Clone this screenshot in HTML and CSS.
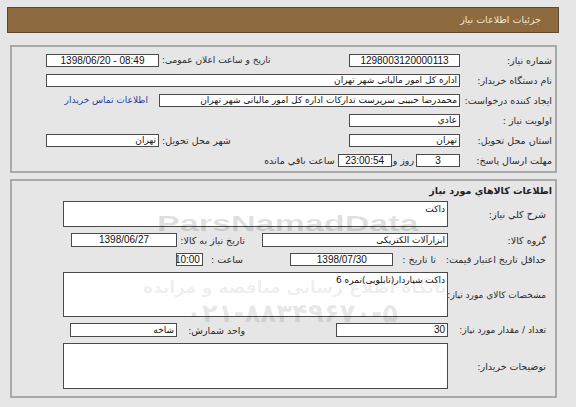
FILE: index.html
```html
<!DOCTYPE html>
<html lang="fa" dir="rtl">
<head>
<meta charset="utf-8">
<link rel="stylesheet" href="styles.css">
</head>
<body>
<div class="page">
  <div class="header">جزئیات اطلاعات نیاز</div>

  <div class="panel p1">
    <div class="grid1">
      <div class="lbl">شماره نیاز:</div>
      <div><span class="box w111 center">1298003120000113</span></div>
      <div class="lbl2 sm"><span>تاریخ و ساعت اعلان عمومی:</span></div>
      <div><span class="box w113 center" dir="ltr">1398/06/20 - 08:49</span></div>

      <div class="lbl">نام دستگاه خریدار:</div>
      <div class="span3"><span class="box full fa">اداره کل امور مالیاتی شهر تهران</span></div>

      <div class="lbl">ایجاد کننده درخواست:</div>
      <div class="span2"><span class="box full fa">محمدرضا حبیبی سرپرست تدارکات اداره کل امور مالیاتی شهر تهران</span></div>
      <div class="linkcell"><a class="link">اطلاعات تماس خریدار</a></div>

      <div class="lbl">اولویت نیاز :</div>
      <div class="span3"><span class="box w111 fa">عادي</span></div>

      <div class="lbl">استان محل تحویل:</div>
      <div><span class="box w111 fa">تهران</span></div>
      <div class="lbl2"><span>شهر محل تحویل:</span></div>
      <div><span class="box w113 fa">تهران</span></div>

      <div class="lbl">مهلت ارسال پاسخ:</div>
      <div class="span3 deadline">
        <span class="box w44 center">3</span>
        <span class="txt-days">روز و</span>
        <span class="box w54 center">23:00:54</span>
        <span class="txt-rem">ساعت باقي مانده</span>
      </div>
    </div>
  </div>

  <div class="panel p2">
    <div class="title">اطلاعات کالاهاي مورد نیاز</div>
    <div class="grid2">
      <div class="lbl l2">شرح کلي نیاز:</div>
      <div class="span3 fill"><span class="box tall fa">داکت</span></div>

      <div class="lbl l2">گروه کالا:</div>
      <div><span class="box w186 h14 fa">ابزارآلات الکتریکی</span></div>
      <div class="lbl3">تاریخ نیاز به کالا:</div>
      <div><span class="box w106 h14 center">1398/06/27</span></div>

      <div class="lbl l2">حداقل تاریخ اعتبار قیمت:</div>
      <div class="until">
        <span class="txt-until">تا تاریخ :</span>
        <span class="box w103 center">1398/07/30</span>
      </div>
      <div class="span2 timecell">
        <span class="txt-time">ساعت :</span>
        <span class="box w27 center">10:00</span>
      </div>

      <div class="lbl l2 sm">مشخصات کالاي مورد نیاز:</div>
      <div class="span3 fill"><span class="box tall fa">داکت شیاردار(تابلویی)نمره 6</span></div>

      <div class="lbl l2 sm">تعداد / مقدار مورد نیاز:</div>
      <div><span class="box w112 h14">30</span></div>
      <div class="lbl3">واحد شمارش:</div>
      <div><span class="box w107 h14 fa">شاخه</span></div>

      <div class="lbl l2">توضیحات خریدار:</div>
      <div class="span3 fill"><span class="box tall"></span></div>
    </div>
  </div>
</div>

<div class="wm" aria-hidden="true">
  <div class="wm-en">ParsNamadData</div>
  <div class="wm-fa1">پایگاه اطلاع رسانی مناقصه و مزایده</div>
  <div class="wm-fa2">۰۲۱-۸۸۳۴۹۶۷۰-۵</div>
</div>
</body>
</html>
```
FILE: styles.css
```css
* { box-sizing: border-box; }
html, body { margin: 0; padding: 0; }
body {
  width: 576px;
  height: 407px;
  overflow: hidden;
  position: relative;
  background: #e6e6e6;
  font-family: "DejaVu Sans", "Liberation Sans", sans-serif;
  font-size: 9.5px;
  color: #2a2a2a;
}
.page { padding: 7px 17px 0 7px; direction: rtl; }

.header {
  height: 26px;
  background: #8c6a3e;
  border: 1px solid #5b4934;
  color: #f3e9d6;
  font-size: 9.5px;
  line-height: 24px;
  padding-right: 17px;
}

.panel {
  margin: 12px 2px 0 3px;
  border: 2px solid #a9a9a9;
  background: #e6e6e6;
}
.p2 { margin-top: 6px; }

.grid1 {
  display: grid;
  grid-template-columns: 95px 188px 113px 113px;
  grid-auto-rows: 20px;
  align-items: center;
  padding: 3px 0 1px;
}
.span2 { grid-column: span 2; }
.span3 { grid-column: span 3; }

.lbl { padding-right: 3px; white-space: nowrap; }
.lbl2 {
  display: flex;
  justify-content: flex-end;
  padding-left: 3px;
  white-space: nowrap;
}
.lbl3 { padding-right: 16px; white-space: nowrap; }
.l2 { padding-right: 9px; }
.sm { font-size: 9px; }

.box {
  display: block;
  height: 13px;
  border: 1px solid #4a4a4a;
  background: #fff;
  color: #111;
  font-family: "Liberation Sans", "DejaVu Sans", sans-serif;
  font-size: 10px;
  line-height: 11px;
  padding: 0 2px;
  white-space: nowrap;
  overflow: hidden;
}
.box.fa { font-family: "DejaVu Sans", sans-serif; font-size: 9px; }
.center { text-align: center; }
.full { width: 100%; }
.w27 { width: 27px; }
.w44 { width: 44px; }
.w54 { width: 54px; }
.w103 { width: 103px; }
.w106 { width: 106px; }
.w107 { width: 107px; }
.w111 { width: 111px; }
.w112 { width: 112px; }
.w113 { width: 113px; }
.w186 { width: 186px; }
.h14 { height: 14px; line-height: 12px; }

.linkcell { padding-right: 11px; white-space: nowrap; font-size: 9px; }
.link { color: #2d3c9c; }

.deadline { display: flex; align-items: center; }
.txt-days { margin: 0 2px 0 1px; white-space: nowrap; }
.txt-rem { margin-right: 3px; white-space: nowrap; }

.title {
  height: 20px;
  line-height: 20px;
  font-weight: bold;
  padding-right: 3px;
  color: #222;
}
.grid2 {
  display: grid;
  grid-template-columns: 107px 187px 84px 114px;
  grid-template-rows: 26px 14px 13px 45px 14px 46px;
  row-gap: 6px;
  align-items: center;
  padding-bottom: 7px;
}
.fill { align-self: stretch; }
.fill .box { height: 100%; line-height: 13px; padding-top: 1px; }
.tall { width: 100%; }
.until { display: flex; align-items: center; padding-right: 12px; }
.txt-until { margin-left: 9px; white-space: nowrap; }
.timecell { display: flex; align-items: center; padding-right: 18px; }
.txt-time { margin-left: 8px; white-space: nowrap; }

.wm { position: absolute; inset: 0; pointer-events: none; }
.wm-en {
  position: absolute;
  left: 157px;
  top: 213px;
  font-family: "Liberation Sans", sans-serif;
  font-weight: bold;
  font-size: 22px;
  line-height: 22px;
  transform: scaleX(1.55);
  transform-origin: left top;
  color: rgba(0, 0, 0, 0.12);
}
.wm-fa1 {
  position: absolute;
  left: 143px;
  top: 276px;
  direction: rtl;
  font-family: "DejaVu Sans", sans-serif;
  font-weight: bold;
  font-size: 17px;
  line-height: 22px;
  color: rgba(0, 0, 0, 0.08);
}
.wm-fa2 {
  position: absolute;
  left: 186px;
  top: 298px;
  direction: ltr;
  font-family: "DejaVu Sans", sans-serif;
  font-weight: bold;
  font-size: 26px;
  line-height: 30px;
  color: rgba(0, 0, 0, 0.1);
}
```
